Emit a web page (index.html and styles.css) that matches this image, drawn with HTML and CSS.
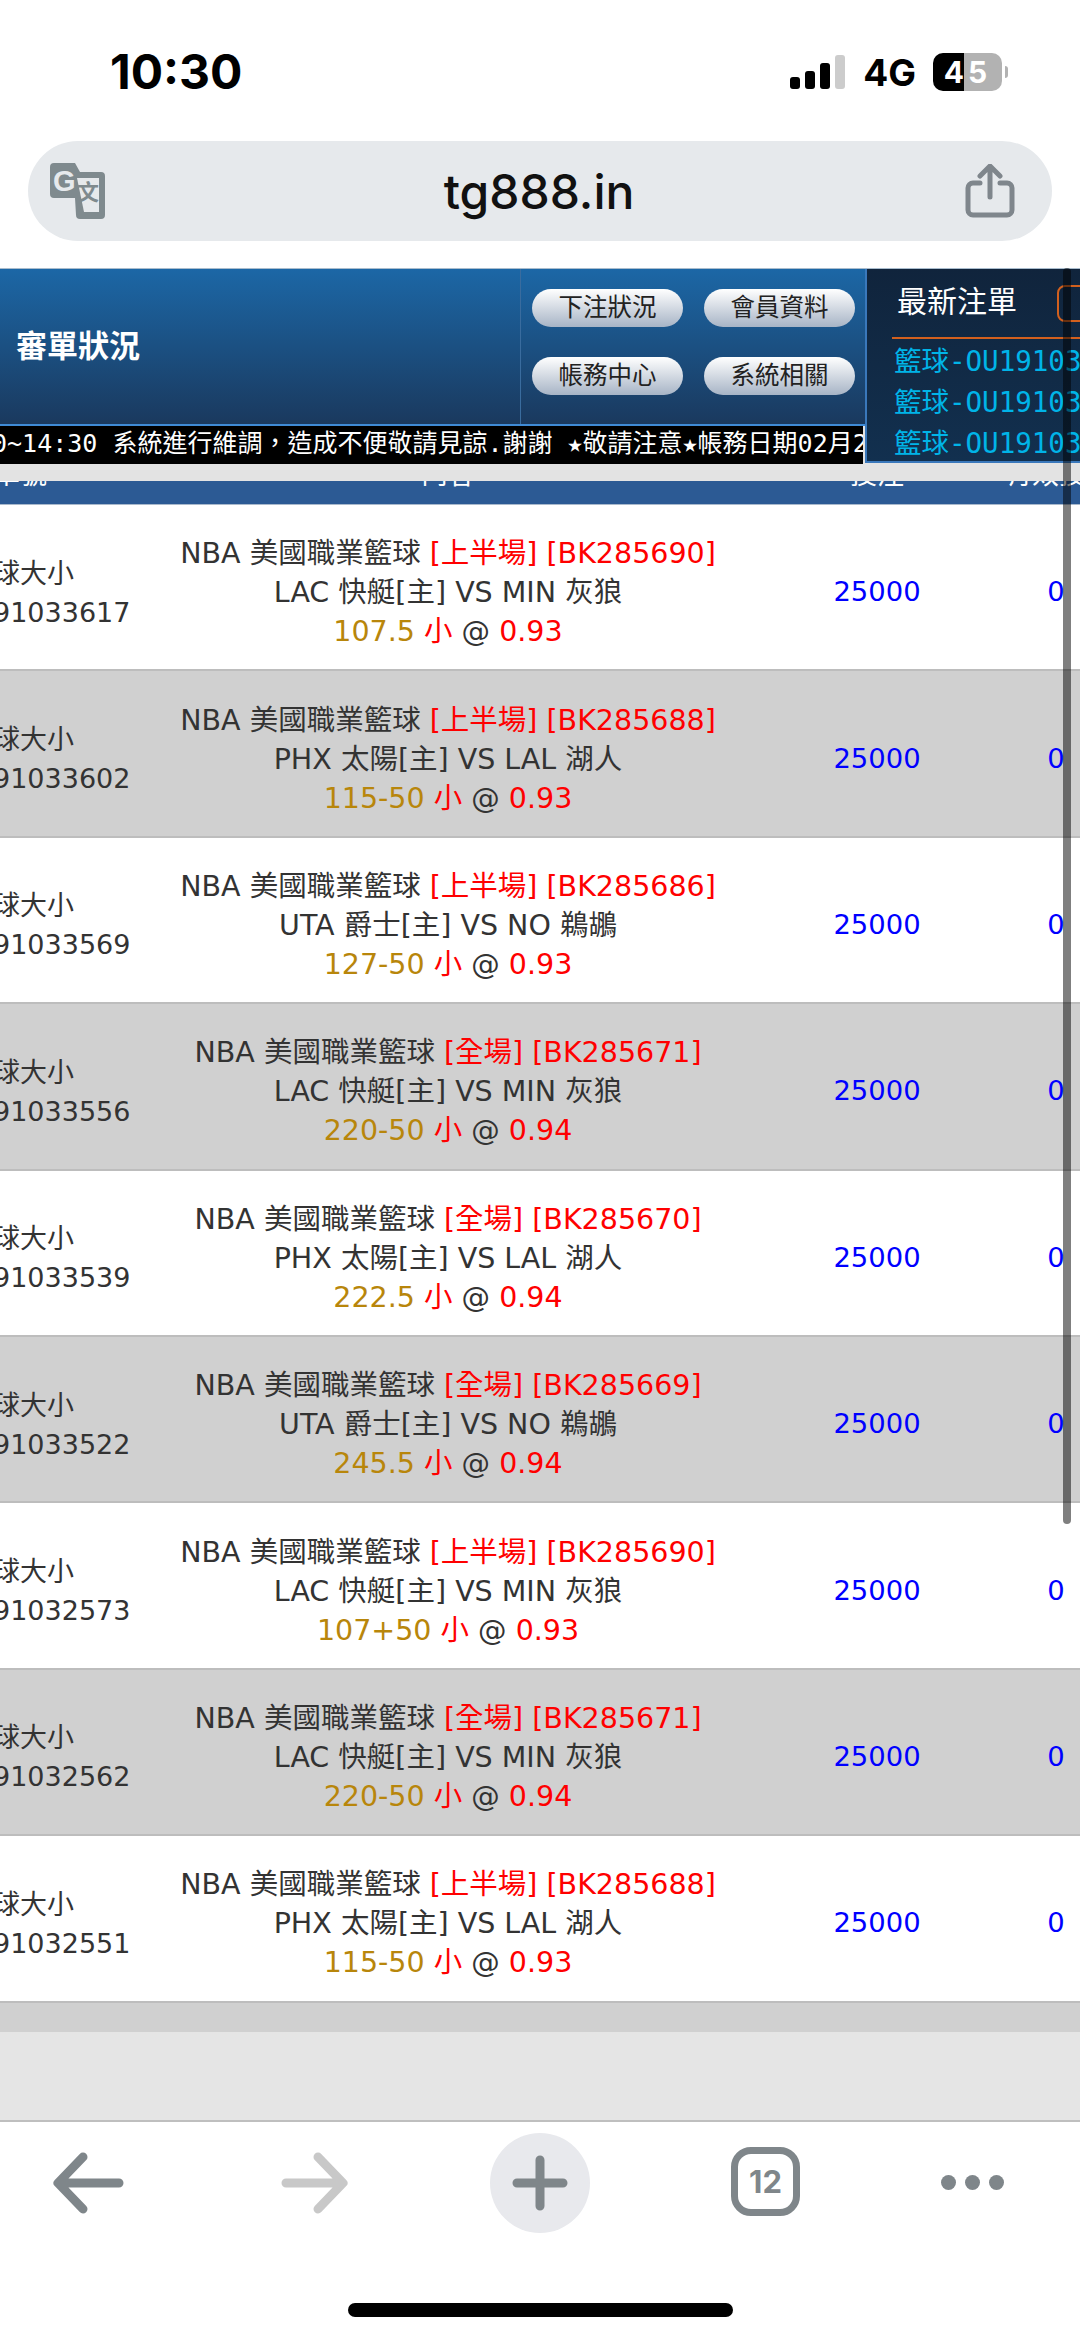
FILE: index.html
```html
<!DOCTYPE html>
<html lang="zh-Hant">
<head>
    <meta charset="UTF-8">
    <title>tg888.in</title>
    <link rel="stylesheet" href="styles.css">
</head>
<body>
    <div class="status-bar">
        <span class="clock">10:30</span>
        <div class="status-right">
            <div class="signal"><i class="b1"></i><i class="b2"></i><i class="b3"></i><i class="b4"></i></div>
            <span class="net">4G</span>
            <div class="battery">45</div>
            <i class="battery-nub"></i>
        </div>
    </div>
    <div class="url-bar">
        <svg class="translate-icon" width="55" height="56" viewBox="0 0 55 56">
            <path d="M4 0h21l5 9h21a4 4 0 0 1 4 4v39a4 4 0 0 1-4 4H30a4 4 0 0 1-4-4l-1-17H4a4 4 0 0 1-4-4V4a4 4 0 0 1 4-4z" fill="#7f8a8e"/>
            <path d="M27 15h22v34H34z" fill="#e6e9ec"/>
            <text x="3" y="28" class="t-g">G</text>
            <text x="27" y="37" class="t-w">文</text>
        </svg>
        <span class="url-text">tg888.in</span>
        <svg class="share-icon" width="50" height="54" viewBox="0 0 50 54" fill="none" stroke="#7f868c" stroke-width="5" stroke-linecap="round" stroke-linejoin="round">
            <path d="M15 19H8a5 5 0 0 0-5 5v22a5 5 0 0 0 5 5h34a5 5 0 0 0 5-5V24a5 5 0 0 0-5-5h-7"/>
            <path d="M25 33V3M15 12l10-10 10 10"/>
        </svg>
    </div>

    <div class="page">
        <div class="top">
            <div class="top-left">
                <div class="banner">
                    <div class="banner-title">審單狀況</div>
                    <div class="menu">
                        <a class="menu-btn">下注狀況</a>
                        <a class="menu-btn">會員資料</a>
                        <a class="menu-btn">帳務中心</a>
                        <a class="menu-btn">系統相關</a>
                    </div>
                </div>
                <div class="ticker">0~14:30 系統進行維調，造成不便敬請見諒.謝謝 ★敬請注意★帳務日期02月21日</div>
            </div>
            <div class="latest">
                <div class="latest-head">
                    <span>最新注單</span>
                    <i class="latest-box"></i>
                </div>
                <div class="latest-list">
                    <div>籃球-OU191033617</div>
                    <div>籃球-OU191033602</div>
                    <div>籃球-OU191033569</div>
                </div>
            </div>
        </div>
        <div class="gray-strip"></div>

        <div class="table">
            <div class="thead">
                <span>單號</span>
                <span class="center">內容</span>
                <span class="center">投注</span>
                <span class="last">有效投注</span>
            </div>

            <div class="row">
                <div class="c-id">球大小<br>91033617</div>
                <div class="c-info">NBA 美國職業籃球 <em>[上半場] [BK285690]</em><br>LAC 快艇[主] VS MIN 灰狼<br><b>107.5</b> <em>小</em> @ <em>0.93</em></div>
                <div class="c-num">25000</div>
                <div class="c-num">0</div>
            </div>
            <div class="row alt">
                <div class="c-id">球大小<br>91033602</div>
                <div class="c-info">NBA 美國職業籃球 <em>[上半場] [BK285688]</em><br>PHX 太陽[主] VS LAL 湖人<br><b>115-50</b> <em>小</em> @ <em>0.93</em></div>
                <div class="c-num">25000</div>
                <div class="c-num">0</div>
            </div>
            <div class="row">
                <div class="c-id">球大小<br>91033569</div>
                <div class="c-info">NBA 美國職業籃球 <em>[上半場] [BK285686]</em><br>UTA 爵士[主] VS NO 鵜鶘<br><b>127-50</b> <em>小</em> @ <em>0.93</em></div>
                <div class="c-num">25000</div>
                <div class="c-num">0</div>
            </div>
            <div class="row alt">
                <div class="c-id">球大小<br>91033556</div>
                <div class="c-info">NBA 美國職業籃球 <em>[全場] [BK285671]</em><br>LAC 快艇[主] VS MIN 灰狼<br><b>220-50</b> <em>小</em> @ <em>0.94</em></div>
                <div class="c-num">25000</div>
                <div class="c-num">0</div>
            </div>
            <div class="row">
                <div class="c-id">球大小<br>91033539</div>
                <div class="c-info">NBA 美國職業籃球 <em>[全場] [BK285670]</em><br>PHX 太陽[主] VS LAL 湖人<br><b>222.5</b> <em>小</em> @ <em>0.94</em></div>
                <div class="c-num">25000</div>
                <div class="c-num">0</div>
            </div>
            <div class="row alt">
                <div class="c-id">球大小<br>91033522</div>
                <div class="c-info">NBA 美國職業籃球 <em>[全場] [BK285669]</em><br>UTA 爵士[主] VS NO 鵜鶘<br><b>245.5</b> <em>小</em> @ <em>0.94</em></div>
                <div class="c-num">25000</div>
                <div class="c-num">0</div>
            </div>
            <div class="row">
                <div class="c-id">球大小<br>91032573</div>
                <div class="c-info">NBA 美國職業籃球 <em>[上半場] [BK285690]</em><br>LAC 快艇[主] VS MIN 灰狼<br><b>107+50</b> <em>小</em> @ <em>0.93</em></div>
                <div class="c-num">25000</div>
                <div class="c-num">0</div>
            </div>
            <div class="row alt">
                <div class="c-id">球大小<br>91032562</div>
                <div class="c-info">NBA 美國職業籃球 <em>[全場] [BK285671]</em><br>LAC 快艇[主] VS MIN 灰狼<br><b>220-50</b> <em>小</em> @ <em>0.94</em></div>
                <div class="c-num">25000</div>
                <div class="c-num">0</div>
            </div>
            <div class="row">
                <div class="c-id">球大小<br>91032551</div>
                <div class="c-info">NBA 美國職業籃球 <em>[上半場] [BK285688]</em><br>PHX 太陽[主] VS LAL 湖人<br><b>115-50</b> <em>小</em> @ <em>0.93</em></div>
                <div class="c-num">25000</div>
                <div class="c-num">0</div>
            </div>
        </div>
        <div class="table-foot"></div>
        <div class="page-bottom"></div>
        <div class="scroll-thumb"></div>
    </div>

    <div class="toolbar">
        <svg width="100" height="100" viewBox="0 0 100 100" fill="none" stroke="#7f868a" stroke-width="9" stroke-linecap="round" stroke-linejoin="round">
            <path d="M46 24L21 50l25 26M22 50h60"/>
        </svg>
        <svg width="100" height="100" viewBox="0 0 100 100" fill="none" stroke="#c8c8c8" stroke-width="9" stroke-linecap="round" stroke-linejoin="round">
            <path d="M55 24l25 26-25 26M79 50H23"/>
        </svg>
        <svg width="100" height="100" viewBox="0 0 100 100">
            <circle cx="50" cy="50" r="50" fill="#e8e9ed"/>
            <path d="M50 27v46M27 50h46" stroke="#7f868a" stroke-width="9" stroke-linecap="round"/>
        </svg>
        <div class="tabs-count">12</div>
        <div class="more"><i></i><i></i><i></i></div>
    </div>
    <div class="home-bar"><i></i></div>
</body>
</html>
```

FILE: styles.css
```css
html, body {
    margin: 0;
    padding: 0;
}
body {
    width: 1080px;
    height: 2337px;
    overflow: hidden;
    background: #fff;
    font-family: "DejaVu Sans", "Noto Sans CJK TC", sans-serif;
    color: #333;
}

/* status bar */
.status-bar {
    height: 141px;
    display: flex;
    justify-content: space-between;
    padding: 48px 72px 0 110px;
    box-sizing: border-box;
}
.clock {
    font-family: Inter, "Liberation Sans", sans-serif;
    font-weight: 700;
    font-size: 48px;
    line-height: 48px;
    color: #000;
}
.status-right {
    display: flex;
    height: 48px;
    align-items: center;
}
.signal {
    display: flex;
    align-items: flex-end;
    gap: 5px;
    height: 34px;
    margin-right: 18px;
}
.signal i {
    width: 10px;
    background: #000;
    border-radius: 3px;
}
.signal .b1 { height: 12px; }
.signal .b2 { height: 18px; }
.signal .b3 { height: 26px; }
.signal .b4 { height: 34px; background: #ccc; }
.net {
    font-family: Inter, "Liberation Sans", sans-serif;
    font-weight: 700;
    font-size: 37px;
    color: #000;
    margin-right: 17px;
}
.battery {
    width: 69px;
    height: 38px;
    border-radius: 10px;
    background: linear-gradient(90deg, #000 31px, #b2b2b2 31px);
    color: #fff;
    font-family: Inter, "Liberation Sans", sans-serif;
    font-weight: 700;
    font-size: 30px;
    letter-spacing: 4px;
    line-height: 38px;
    text-align: center;
}
.battery-nub {
    width: 3px;
    height: 12px;
    margin-left: 3px;
    border-radius: 0 3px 3px 0;
    background: #b2b2b2;
}

/* url bar */
.url-bar {
    height: 100px;
    margin: 0 28px;
    padding: 0 37px 0 22px;
    border-radius: 50px;
    background: #e6e9ec;
    display: flex;
    align-items: center;
    justify-content: space-between;
}
.url-text {
    margin-left: 8px;
    font-family: Inter, "Liberation Sans", sans-serif;
    font-weight: 500;
    font-size: 48px;
    color: #111;
}
.t-g {
    font-family: "Liberation Sans", sans-serif;
    font-weight: 700;
    font-size: 29px;
    fill: #e6e9ec;
}
.t-w {
    font-family: "Noto Sans CJK TC", sans-serif;
    font-size: 22px;
    font-weight: 700;
    fill: #7f8a8e;
}

/* page */
.page {
    position: relative;
    margin-top: 27px;
}
.top {
    display: flex;
    height: 196px;
    background: #e3e3e3;
    border-top: 1px solid #a9bccd;
    box-sizing: border-box;
}
.top-left {
    width: 865px;
    flex: none;
}
.banner {
    height: 155px;
    display: flex;
    border-bottom: 2px solid #3f8bd6;
    background: linear-gradient(#1c67a6, #1a395e);
}
.banner-title {
    width: 521px;
    padding: 57px 0 0 16px;
    box-sizing: border-box;
    border-right: 1px solid #3a6c9e;
    color: #fff;
    font-weight: 700;
    font-size: 31px;
    line-height: 40px;
}
.menu {
    display: grid;
    grid-template-columns: 151px 151px;
    grid-auto-rows: 38px;
    gap: 30px 21px;
    padding: 20px 0 0 11px;
}
.menu-btn {
    border-radius: 19px;
    background: linear-gradient(#fff, #a7b4c6);
    color: #222;
    font-size: 24.5px;
    line-height: 38px;
    text-align: center;
}
.ticker {
    width: 863px;
    height: 38px;
    overflow: hidden;
    background: #000;
    color: #fff;
    font-family: "DejaVu Sans Mono", "Noto Sans CJK TC", monospace;
    font-size: 25px;
    line-height: 36px;
    white-space: nowrap;
    text-indent: -8px;
}
.latest {
    flex: 1;
    height: 194px;
    box-sizing: border-box;
    border-left: 2px solid #3a78bb;
    border-bottom: 2px solid #3a78bb;
    background: linear-gradient(#10243c, #12304f);
    padding-left: 25px;
    overflow: hidden;
}
.latest-head {
    height: 70px;
    width: 400px;
    display: flex;
    box-sizing: border-box;
    border-bottom: 2px solid #d2601e;
    color: #fff;
    font-size: 30px;
    line-height: 38px;
    padding: 14px 0 0 5px;
}
.latest-box {
    width: 60px;
    height: 37px;
    margin: 2px 0 0 40px;
    border: 2px solid #d2601e;
    border-radius: 8px;
    box-sizing: border-box;
}
.latest-list {
    width: 400px;
    padding: 2px 0 0 2px;
    color: #00b4e8;
    font-family: "DejaVu Sans Mono", "Noto Sans CJK TC", monospace;
    font-size: 27.5px;
    line-height: 41px;
    white-space: nowrap;
}
.gray-strip {
    height: 17px;
    background: #e3e3e3;
}

/* table */
.table {
    margin-left: -7px;
    width: 1100px;
}
.thead,
.row {
    display: grid;
    grid-template-columns: 168px 574px 284px 74px;
}
.thead {
    height: 24px;
    overflow: hidden;
    background: #2c5a94;
    border-bottom: 1px solid #a9b9cc;
    box-sizing: border-box;
    color: #fff;
    font-size: 27px;
    line-height: 16px;
}
.thead span {
    display: block;
    margin-top: -14px;
    white-space: nowrap;
}
.thead .center {
    text-align: center;
}
.thead .last {
    margin-left: -14px;
}
.row {
    height: 166.4px;
    box-sizing: border-box;
    padding-top: 11px;
    border-bottom: 2px solid #bdbdbd;
    font-size: 27px;
    line-height: 39px;
    align-items: center;
}
.row.alt {
    background: #d0d0d0;
}
.c-id {
    white-space: nowrap;
}
.c-info {
    font-size: 28.5px;
    text-align: center;
    white-space: nowrap;
}
.c-info em {
    font-style: normal;
    color: #f00;
}
.c-info b {
    font-weight: 400;
    color: #b8860b;
}
.c-num {
    margin-top: -2px;
    font-size: 27.4px;
    text-align: center;
    color: #00f;
}
.table-foot {
    height: 29px;
    background: #d0d0d0;
}
.page-bottom {
    height: 90px;
    background: #e5e5e5;
    border-bottom: 2px solid #bfbfbf;
    box-sizing: border-box;
}
.scroll-thumb {
    position: absolute;
    top: 0;
    left: 1063px;
    width: 8px;
    height: 1256px;
    border-radius: 4px;
    background: rgba(0, 0, 0, .5);
}

/* bottom toolbar */
.toolbar {
    height: 181px;
    box-sizing: border-box;
    padding: 11px 0 0 37px;
    display: grid;
    grid-template-columns: 226px 227px 225px 207px 1fr;
    align-items: start;
}
.tabs-count {
    width: 69px;
    height: 69px;
    margin: 14px 0 0 16px;
    box-sizing: border-box;
    border: 7px solid #7f868a;
    border-radius: 20px;
    color: #7f868a;
    font-family: Inter, "Liberation Sans", sans-serif;
    font-weight: 700;
    font-size: 31px;
    line-height: 55px;
    text-align: center;
}
.more {
    display: flex;
    gap: 9px;
    margin: 42px 0 0 19px;
}
.more i {
    width: 15px;
    height: 15px;
    border-radius: 50%;
    background: #7f868a;
}
.home-bar {
    height: 15px;
    display: flex;
    justify-content: center;
}
.home-bar i {
    width: 385px;
    height: 14px;
    border-radius: 7px;
    background: #000;
}
```
